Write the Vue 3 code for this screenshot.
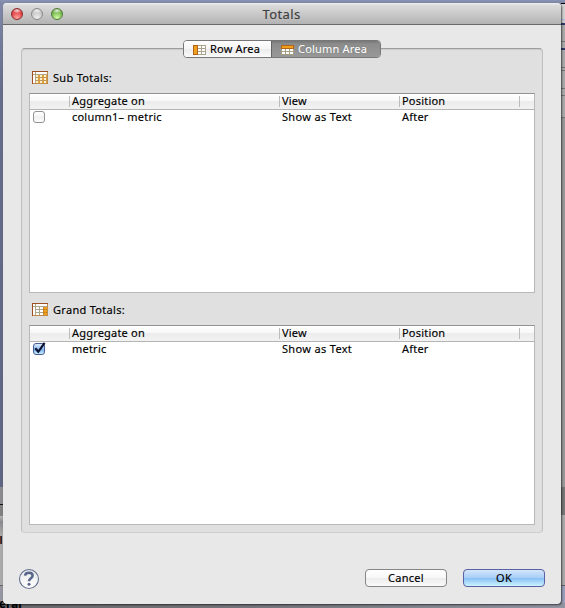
<script setup>
const sections = [
  { title: 'Sub Totals:', kind: 'sub', checked: false, name: 'column1– metric' },
  { title: 'Grand Totals:', kind: 'grand', checked: true, name: 'metric' },
]
</script>

<template>
  <div class="desktop">
    <span class="behind-mark"></span>
    <span class="behind-text">eral</span>
    <div class="right-edge"></div>
    <div class="dialog">
      <header class="titlebar">
        <div class="lights">
          <i class="light red"></i><i class="light gray"></i><i class="light green"></i>
        </div>
        <span class="title">Totals</span>
      </header>
      <main class="body">
        <div class="panel">
          <div class="tabs">
            <div class="tab row-tab">
              <svg width="13" height="10" viewBox="0 0 13 10" shape-rendering="crispEdges">
                <rect width="13" height="10" fill="#a9a48b" />
                <rect width="5" height="10" fill="#b5651a" />
                <rect x="1" y="1" width="3" height="8" fill="#f0a01c" />
                <path d="M5 1h3v2H5zM9 1h3v2H9zM5 4h3v2H5zM9 4h3v2H9zM5 7h3v2H5zM9 7h3v2H9z" fill="#fff" />
              </svg>
              <span>Row Area</span>
            </div>
            <div class="tab active">
              <svg width="13" height="10" viewBox="0 0 13 10" shape-rendering="crispEdges">
                <rect width="13" height="10" fill="#a79f83" />
                <rect width="13" height="4" fill="#b5651a" />
                <rect x="1" y="1" width="11" height="2" fill="#f0a01c" />
                <path d="M1 4h3v2H1zM5 4h3v2H5zM9 4h3v2H9zM1 7h3v2H1zM5 7h3v2H5zM9 7h3v2H9z" fill="#fff" />
              </svg>
              <span>Column Area</span>
            </div>
          </div>
          <section v-for="s in sections" :key="s.kind" class="section">
            <div class="caption">
              <svg width="16" height="13" viewBox="0 0 16 13" shape-rendering="crispEdges">
                <rect width="16" height="13" fill="#c08a48" />
                <path d="M0 0h16v1H0zM0 0h1v13H0z" fill="#a04f22" />
                <rect x="1" y="1" width="14" height="11" fill="#fff" />
                <path d="M3 1h1v11H3zM1 3h14v1H1z" fill="#b0a488" />
                <template v-if="s.kind === 'sub'">
                  <rect x="4" y="4" width="11" height="8" fill="#e5a03a" />
                  <path d="M4 4h2v2H4zM8 4h2v2H8zM12 4h2v2H12zM4 7h2v2H4zM8 7h2v2H8zM12 7h2v2H12zM4 10h2v2H4zM8 10h2v2H8zM12 10h2v2H12z" fill="#fff1cf" />
                  <path d="M4 6h11v1H4zM4 9h11v1H4z" fill="#b99a5c" />
                </template>
                <template v-else>
                  <path d="M7 4h1v8H7zM4 6h11v1H4zM4 9h11v1H4z" fill="#a9a48b" />
                  <rect x="11" y="4" width="4" height="8" fill="#f0a01c" />
                  <path d="M11 4h1v8h-1zM11 6h4v1h-4zM11 9h4v1h-4z" fill="#c98222" />
                </template>
              </svg>
              <span>{{ s.title }}</span>
            </div>
            <div class="table">
              <div class="row head">
                <div></div>
                <div>Aggregate on</div>
                <div>View</div>
                <div>Position</div>
              </div>
              <div class="row">
                <div class="check-cell">
                  <span class="check" :class="{ on: s.checked }">
                    <svg v-if="s.checked" width="14" height="13" viewBox="0 0 14 13">
                      <path d="M2.3 6.2L5.3 9.8L11.6 0.9" fill="none" stroke="#0d1230" stroke-width="2.2" />
                    </svg>
                  </span>
                </div>
                <div class="name">{{ s.name }}</div>
                <div class="view">Show as Text</div>
                <div>After</div>
              </div>
            </div>
          </section>
        </div>
        <footer class="footer">
          <svg class="help" width="22" height="22" viewBox="0 0 22 22">
            <defs>
              <linearGradient id="helpFill" x2="0" y2="1">
                <stop stop-color="#e6e7ea" /><stop offset="1" stop-color="#fff" />
              </linearGradient>
            </defs>
            <circle cx="11" cy="11" r="9.5" fill="url(#helpFill)" stroke="#64708f" stroke-width="1.1" />
            <path d="M7.1 7.6C7.5 3.9 14.6 3.8 14.6 7.7C14.6 10.3 11 10.2 11 13.2" fill="none" stroke="#57658a" stroke-width="2.5" />
            <circle cx="11" cy="16.2" r="1.5" fill="#57658a" />
          </svg>
          <button class="btn">Cancel</button>
          <button class="btn ok">OK</button>
        </footer>
      </main>
    </div>
  </div>
</template>

<style>
body { margin: 0; overflow: hidden; }
</style>

<style scoped>
* { box-sizing: border-box; }
.desktop {
  position: relative;
  width: 565px;
  height: 608px;
  padding: 3px 4px 4px 3px;
  overflow: hidden;
  font: 11px/16px "Noto Sans", "Open Sans", sans-serif;
  letter-spacing: .2px;
  -webkit-text-stroke: .15px currentColor;
  color: #000;
  background:
    linear-gradient(#8b93b4, #8189a9) 0 0 / 565px 3px no-repeat,
    linear-gradient(90deg, #68686d, #77777d 50%, #9395a3) 0 603px / 565px 5px no-repeat,
    linear-gradient(#8189a9, #656d8b 90px, #5f6683 487px, #8b8b8d 487px, #8b8b8d 504px, #111 504px, #111 505px, #808082 505px, #808082 516px, #b5b5b5 516px, #8a8a90 522px, #aaa 535px, #aaa 585px, #666 585px, #666 586px, #9696a0 586px);
}
.right-edge {
  position: absolute;
  right: 0;
  top: 3px;
  width: 4px;
  height: 600px;
  background: linear-gradient(#000 0 1px, #d0d0d0 1px 16px, #a9b9dd 16px 17px, #ccc 17px 20px, #303a69 20px 22px, #aaa 22px 38px, #777 38px 39px, #aaa 39px 45px, #303a69 45px 47px, #aaa 47px 64px, #777 64px 65px, #aaa 65px 67px, #777 67px 68px, #aaa 68px 85px, #777 85px 86px, #aaa 86px 92px, #777 92px 93px, #aaa 93px 114px, #777 114px 115px, #999 115px 484px, #777 484px 512px, #aaa 512px 582px, #666 582px 583px, #9aa0ba 583px);
}
.behind-mark {
  position: absolute;
  left: 0;
  top: 536px;
  width: 2px;
  height: 8px;
  background: linear-gradient(90deg, #702f25 50%, #1c2a3c 50%);
}
.behind-text {
  position: absolute;
  left: -1px;
  top: 596px;
  font-weight: 700;
  font-size: 11.5px;
  line-height: 16px;
}
.dialog {
  position: relative;
  width: 558px;
  height: 601px;
  border-radius: 4px;
  background: #e8e8e8;
  box-shadow: 1px 1px 2px rgba(0, 0, 0, .6);
  overflow: hidden;
}
.titlebar {
  display: grid;
  grid-template-columns: 1fr auto 1fr;
  align-items: center;
  height: 22px;
  border-bottom: 1px solid #696969;
  background: linear-gradient(#f2f2f2, #dcdcdc 2px, #b3b3b3);
}
.lights { display: flex; gap: 8px; padding-left: 8px; }
.light {
  width: 12px;
  height: 12px;
  border-radius: 50%;
  border: 1px solid #777;
}
.red { border-color: #8a2a2c; background: radial-gradient(ellipse 5px 3px at 50% 15%, #fffc, transparent), radial-gradient(circle at 50% 90%, #ffa9a2, #e64a4c 55%, #b92a30); }
.gray { border-color: #8a8a8a; background: radial-gradient(ellipse 5px 3px at 50% 15%, #fffc, transparent), radial-gradient(circle at 50% 90%, #eee, #c8c8c8 60%, #aaa); }
.green { border-color: #4e7b35; background: radial-gradient(ellipse 5px 3px at 50% 15%, #fffc, transparent), radial-gradient(circle at 50% 90%, #d5ffab, #7fbf55 55%, #538c36); }
.title { margin-left: -1px; font-size: 13px; letter-spacing: .4px; color: #3f3f3f; }
.body { padding: 23px 18px 0; }
.panel {
  width: 522px;
  height: 485px;
  padding: 0 8px;
  border: 1px solid #bfbfbf;
  border-top-color: #9c9c9c;
  border-bottom-color: #cfcfcf;
  border-radius: 4px;
  background: #e0e0e0;
  box-shadow: inset 0 1px 1px #cdcdcd;
}
.tabs {
  display: flex;
  width: 198px;
  height: 18px;
  margin: -9px auto 12px 153px;
  border: 1px solid #777;
  border-radius: 4px;
  overflow: hidden;
}
.tab { display: flex; align-items: center; gap: 4px; padding-left: 9px; white-space: nowrap; }
.tab svg { margin-top: 2px; }
.row-tab { width: 87px; background: linear-gradient(#fff, #f6f6f6 50%, #ececec 50%, #fafafa); }
.active {
  flex: 1;
  color: #fff;
  background: linear-gradient(#777, #8c8c8c 3px, #989898);
  border-left: 1px solid #666;
  text-shadow: 0 0 1px #555;
}
.section { height: 232px; }
.caption { display: flex; align-items: center; gap: 5px; height: 16px; margin: 0 0 7px 2px; letter-spacing: .3px; }
.caption svg { margin-top: -1px; }
.table { width: 506px; margin-left: -1px; height: 200px; border: 1px solid #b8b8b8; border-top-color: #929292; background: #fff; }
.row { display: grid; grid-template-columns: 40px 210px 120px 120px; height: 15px; }
.row > div { padding-left: 2px; line-height: 13px; white-space: nowrap; }
.row.head { height: 16px; border-bottom: 1px solid #b4b4b4; background: linear-gradient(#fff, #f7f7f7 50%, #ececec 50%, #f2f2f2); }
.row.head > div { background: linear-gradient(#bcbcbc, #bcbcbc) right 2px / 1px 11px no-repeat; }
.name { letter-spacing: .22px; }
.view { letter-spacing: .33px; }
.row .check-cell { padding: 1px 0 0 3px; }
.check { display: block; width: 12px; height: 12px; border: 1px solid #929292; border-radius: 3px; background: linear-gradient(#fff, #f0f0f0 60%, #fff); }
.check.on { border-color: #4b5b94; background: linear-gradient(#dcebfc, #7fb4ee 60%, #c9f0ff); }
.check svg { display: block; margin: -2px 0 0 -1px; overflow: visible; }
.footer { display: flex; height: 22px; margin: 35px 0 0 -3px; }
.help { flex: none; }
.btn {
  display: flex;
  align-items: center;
  justify-content: center;
  flex: none;
  width: 82px;
  height: 18px;
  margin: 1px 0 0 325px;
  padding: 0;
  font: inherit;
  letter-spacing: .3px;
  color: #000;
  border: 1px solid #858585;
  border-radius: 4px;
  background: linear-gradient(#fff, #f7f7f7 50%, #ececec 50%, #fafafa);
}
.btn.ok { margin-left: 16px; border-color: #5a60a4; background: linear-gradient(#d4e6fb, #a6cdf7 50%, #86bdf4 50%, #cdf4ff); }
</style>
